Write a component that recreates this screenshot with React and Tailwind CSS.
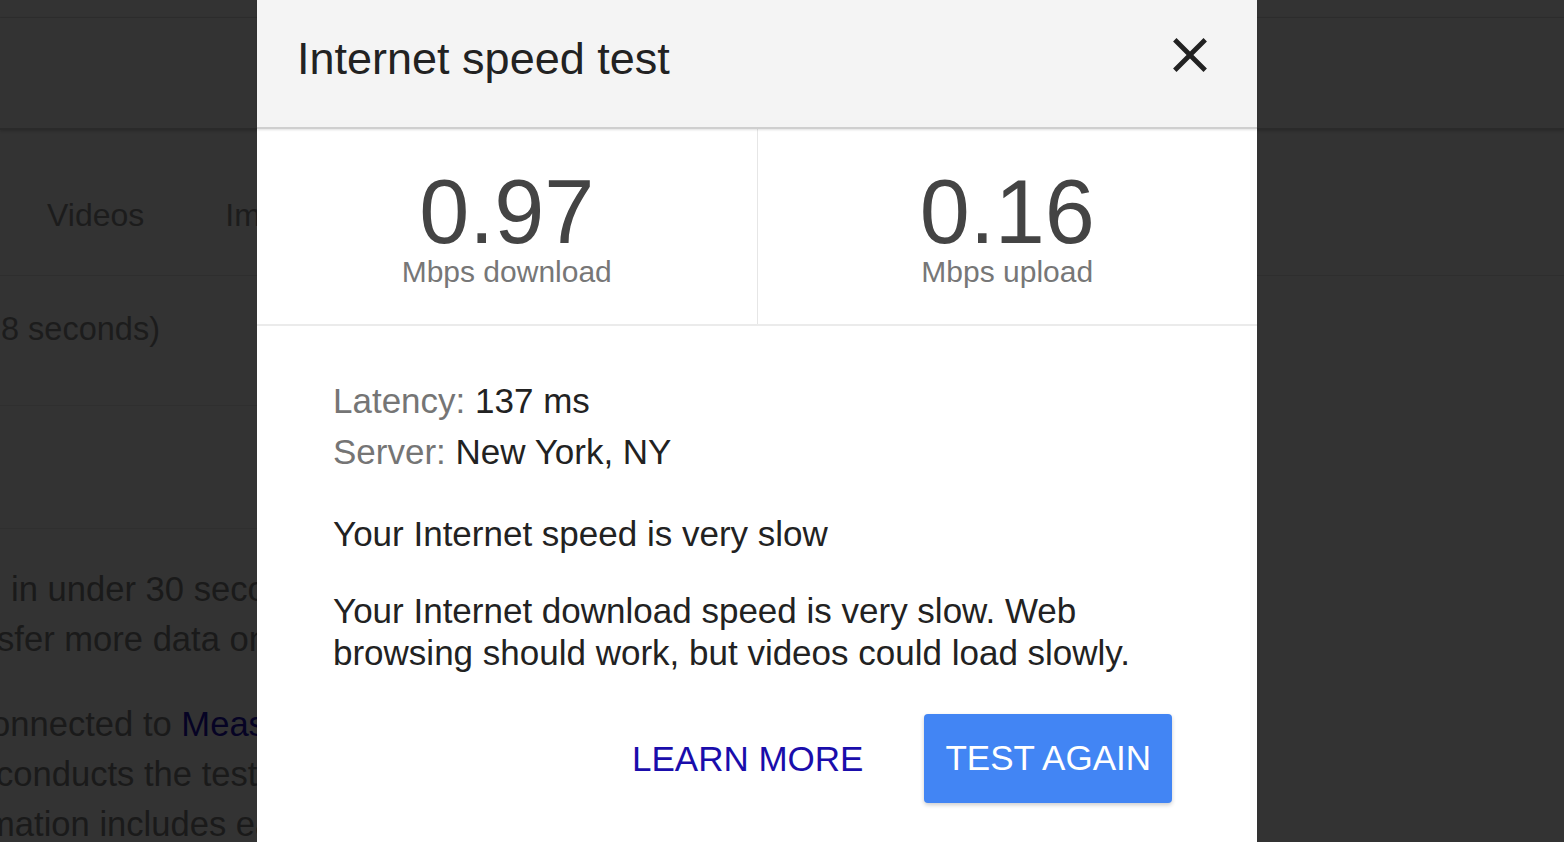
const SpeedModal = () => {
  return (
    <div className="absolute left-[257px] top-0 w-[1000px] bg-white">
      {/* header */}
      <div className="relative z-10 h-[129px] bg-[#f4f4f4] border-b-2 border-[#cfcfcf] shadow-[0_1px_2px_rgba(0,0,0,0.12)] flex items-start justify-between">
        <h1 className="pl-[40px] pt-[36px] text-[45px] leading-[45px] text-[#222]">
          Internet speed test
        </h1>
        <svg
          width="58"
          height="58"
          viewBox="0 0 24 24"
          className="mt-[26px] mr-[38px]"
        >
          <path
            fill="#222"
            d="M19 6.41L17.59 5 12 10.59 6.41 5 5 6.41 10.59 12 5 17.59 6.41 19 12 13.41 17.59 19 19 17.59 13.41 12z"
          />
        </svg>
      </div>

      {/* results */}
      <div className="flex border-b-2 border-[#ebebeb]">
        <div className="flex-1 h-[195px] flex flex-col items-center justify-center border-r border-[#e6e6e6]">
          <div className="text-[90px] leading-[90px] text-[#444]">0.97</div>
          <div className="text-[30px] leading-[30px] text-[#777]">Mbps download</div>
        </div>
        <div className="flex-1 h-[195px] flex flex-col items-center justify-center">
          <div className="text-[90px] leading-[90px] text-[#444]">0.16</div>
          <div className="text-[30px] leading-[30px] text-[#777]">Mbps upload</div>
        </div>
      </div>

      {/* details */}
      <div className="pl-[76px] pr-[85px] pt-[49px] pb-[80px] text-[35px] text-[#222]">
        <div className="leading-[51px]">
          <span className="text-[#757575]">Latency:</span> 137 ms
        </div>
        <div className="leading-[51px]">
          <span className="text-[#757575]">Server:</span> New York, NY
        </div>
        <p className="mt-[36px] leading-[42px]">Your Internet speed is very slow</p>
        <p className="mt-[35px] leading-[42px]">
          Your Internet download speed is very slow. Web browsing should work,
          but videos could load slowly.
        </p>
        <div className="mt-[40px] flex items-center justify-end">
          <button className="mr-[61px] text-[#1a0dab] leading-[40px]">LEARN MORE</button>
          <button className="h-[89px] px-[21px] rounded-[4px] bg-[#4285f4] text-white shadow-[0_2px_4px_rgba(0,0,0,0.2)]">
            TEST AGAIN
          </button>
        </div>
      </div>
    </div>
  );
};

export default function App() {
  return (
    <div className="relative h-[842px] w-full overflow-hidden bg-[#333] font-['Liberation_Sans',Arial,sans-serif]">
      {/* dimmed results page underneath */}
      <div className="h-[18px] border-b border-[#2e2e2e]" />
      <div className="h-[112px] border-b-2 border-[#2a2a2a] shadow-[0_1px_3px_rgba(0,0,0,0.2)]" />
      <div className="h-[146px] border-b border-[#2e2e2e] flex pl-[47px] pt-[69px] gap-[81px] text-[32px] leading-[32px] text-[#1c1c1c]">
        <span>Videos</span>
        <span>Images</span>
      </div>
      <div className="w-[1257px] h-[130px] border-b border-[#2f2f2f] pt-[37px] pl-[1px] text-[32.5px] leading-[32.5px] text-[#1c1c1c]">
        8 seconds)
      </div>
      <div className="w-[1257px] h-[123px] border-b border-[#2f2f2f]" />
      <div className="w-[1250px] pt-[35px] text-[34.6px] leading-[50px] text-[#1a1a1a] whitespace-nowrap">
        <div className="pl-[11px]">in under 30 seconds</div>
        <div className="-ml-[3px]">sfer more data on</div>
        <div className="mt-[35px] -ml-[9px]">
          onnected to <span className="text-[#060324]">Measurement Lab</span>
        </div>
        <div className="-ml-[4px]">conducts the test</div>
        <div className="-ml-[14px]">mation includes each</div>
      </div>

      <SpeedModal />
    </div>
  );
}
